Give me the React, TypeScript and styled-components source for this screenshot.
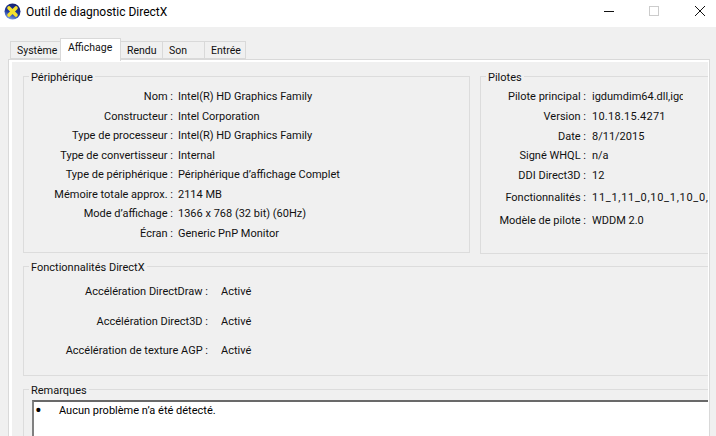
import React from 'react'
import styled, { createGlobalStyle } from 'styled-components'

const GlobalStyle = createGlobalStyle`
  html, body {
    margin: 0;
    padding: 0;
    height: 100%;
    overflow: hidden;
    background: #f0f0f0;
  }
  body {
    font-family: Roboto, 'Noto Sans', sans-serif;
    font-size: 11px;
    color: #111;
  }
`

const tabs = [
  ['Système', 51],
  ['Affichage', 61],
  ['Rendu', 43],
  ['Son', 43],
  ['Entrée', 42]
] as const

const deviceRows = [
  ['Nom', 'Intel(R) HD Graphics Family'],
  ['Constructeur', 'Intel Corporation'],
  ['Type de processeur', 'Intel(R) HD Graphics Family'],
  ['Type de convertisseur', 'Internal'],
  ['Type de périphérique', 'Périphérique d’affichage Complet'],
  ['Mémoire totale approx.', '2114 MB'],
  ['Mode d’affichage', '1366 x 768 (32 bit) (60Hz)'],
  ['Écran', 'Generic PnP Monitor']
]

// label, value, row height, clip width, letter spacing
const driverRows = [
  ['Pilote principal', 'igdumdim64.dll,igd10iumd64.dll', 20, 91, 0],
  ['Version', '10.18.15.4271', 19.5, 116, 0.25],
  ['Date', '8/11/2015', 19.5, 116, 0],
  ['Signé WHQL', 'n/a', 19.5, 116, 0],
  ['DDI Direct3D', '12', 22, 116, 0],
  ['Fonctionnalités', '11_1,11_0,10_1,10_0,9_3,9_2,9_1', 23, 116, 0.7],
  ['Modèle de pilote', 'WDDM 2.0', 20, 116, 0]
] as const

const featureRows = [
  ['Accélération DirectDraw', 'Activé'],
  ['Accélération Direct3D', 'Activé'],
  ['Accélération de texture AGP', 'Activé']
]

const App: React.FC = () => (
  <Window>
    <GlobalStyle />
    <TitleBar>
      <AppIcon viewBox="0 0 17 17">
        <defs>
          <linearGradient id="ball" x1="0.7" y1="0" x2="0.3" y2="1">
            <stop offset="0" stopColor="#14206e" />
            <stop offset="0.6" stopColor="#1f3aa0" />
            <stop offset="1" stopColor="#86a8e8" />
          </linearGradient>
        </defs>
        <circle cx="8.5" cy="8.5" r="8" fill="url(#ball)" />
        <path d="M5 5L12 12M12 5L5 12" stroke="#f5e12e" strokeWidth="3.6" strokeLinecap="round" />
      </AppIcon>
      <Title>Outil de diagnostic DirectX</Title>
      <WindowButtons>
        <MinimizeIcon width="10" height="10" viewBox="0 0 10 10"><path d="M0 5.5H10" stroke="#111" /></MinimizeIcon>
        <svg width="10" height="10" viewBox="0 0 10 10"><rect x="0.5" y="0.5" width="9" height="9" fill="none" stroke="#ccc" /></svg>
        <svg width="10" height="10" viewBox="0 0 10 10"><path d="M0 0L10 10M10 0L0 10" stroke="#111" /></svg>
      </WindowButtons>
    </TitleBar>
    <Content>
      <TabStrip>
        {tabs.map(([t, w]) => (
          <Tab key={t} $active={t === 'Affichage'} $width={w}>{t}</Tab>
        ))}
      </TabStrip>
      <Panel>
        <TopGroups>
          <DeviceGroup>
            <Legend>Périphérique</Legend>
            <RowList>
              {deviceRows.map(([k, v]) => (
                <InfoRow key={k} $labelWidth={149} $gap={5} $height={19.5}>
                  <Label>{k} :</Label>
                  <Value>{v}</Value>
                </InfoRow>
              ))}
            </RowList>
          </DeviceGroup>
          <DriverGroup>
            <Legend>Pilotes</Legend>
            <RowList>
              {driverRows.map(([k, v, h, w, s]) => (
                <InfoRow key={k} $labelWidth={105} $gap={6} $height={h}>
                  <Label>{k} :</Label>
                  <Value $maxWidth={w} $spacing={s}>{v}</Value>
                </InfoRow>
              ))}
            </RowList>
          </DriverGroup>
        </TopGroups>
        <FeatureGroup>
          <Legend>Fonctionnalités DirectX</Legend>
          <FeatureList>
            {featureRows.map(([k, v]) => (
              <FeatureRow key={k}>
                <Label>{k} :</Label>
                <Value>{v}</Value>
              </FeatureRow>
            ))}
          </FeatureList>
        </FeatureGroup>
        <NotesGroup>
          <Legend>Remarques</Legend>
          <NotesBox>
            <Bullet>•</Bullet>
            <NoteText>Aucun problème n’a été détecté.</NoteText>
          </NotesBox>
        </NotesGroup>
      </Panel>
    </Content>
  </Window>
)

const Window = styled.div`
  width: 716px;
  height: 436px;
  overflow: hidden;
  display: flex;
  flex-direction: column;
  background: #f0f0f0;
`

const TitleBar = styled.div`
  height: 27px;
  flex: none;
  background: #fff;
  display: flex;
  align-items: center;
  padding-left: 4px;
`

const AppIcon = styled.svg`
  width: 17px;
  height: 17px;
  margin-right: 5px;
  margin-top: -4px;
`

const Title = styled.div`
  font-size: 12px;
  margin-top: -4px;
  color: #000;
`

const WindowButtons = styled.div`
  margin-left: auto;
  display: flex;
  align-items: center;
  gap: 36px;
  padding-right: 11px;
  margin-top: -5px;
  svg {
    display: block;
  }
`

const MinimizeIcon = styled.svg`
  margin-right: -1px;
`

const Content = styled.div`
  flex: 1;
  padding: 11px 6px 0 8px;
  min-height: 0;
`

const TabStrip = styled.div`
  display: flex;
  align-items: flex-end;
  height: 21px;
  padding-left: 3px;
  position: relative;
  z-index: 1;
`

const Tab = styled.div<{ $active?: boolean; $width: number }>`
  box-sizing: border-box;
  width: ${p => p.$width}px;
  height: ${p => (p.$active ? 23 : 18)}px;
  margin-bottom: ${p => (p.$active ? -2 : 0)}px;
  border: 1px solid #d9d9d9;
  border-bottom: ${p => (p.$active ? 'none' : '1px solid #d9d9d9')};
  margin-left: -1px;
  padding-left: ${p => (p.$active ? 7 : 6)}px;
  background: ${p => (p.$active ? '#fff' : '#f0f0f0')};
  font-size: 10.5px;
  line-height: 17px;
  z-index: ${p => (p.$active ? 2 : 0)};
`

const Panel = styled.div`
  box-sizing: border-box;
  height: 400px;
  border: 1px solid #d9d9d9;
  padding: 16px 1px 0 14px;
  display: flex;
  flex-direction: column;
  gap: 12px;
  box-shadow: inset 3px 0 0 #fff, inset 0 2px 0 #fff, inset -1px 0 0 #fff;
`

const TopGroups = styled.div`
  display: flex;
  gap: 10px;
`

const DeviceGroup = styled.div`
  position: relative;
  box-sizing: border-box;
  width: 447px;
  height: 177px;
  flex: none;
  border: 1px solid #dcdcdc;
`

const DriverGroup = styled.div`
  position: relative;
  box-sizing: border-box;
  flex: 1;
  height: 178px;
  border: 1px solid #dcdcdc;
  border-right: none;
`

const FeatureGroup = styled.div`
  position: relative;
  box-sizing: border-box;
  height: 110px;
  flex: none;
  margin-bottom: 1px;
  border: 1px solid #dcdcdc;
  border-right: none;
`

const NotesGroup = styled.div`
  position: relative;
  box-sizing: border-box;
  height: 80px;
  border: 1px solid #dcdcdc;
  border-right: none;
  padding: 10px 0 0 8px;
`

const Legend = styled.div`
  position: absolute;
  top: -7px;
  left: 5px;
  padding: 0 2px;
  background: #f0f0f0;
  line-height: 15px;
`

const RowList = styled.div`
  padding-top: 10px;
  display: flex;
  flex-direction: column;
`

const InfoRow = styled.div<{ $labelWidth: number; $gap: number; $height: number }>`
  display: grid;
  grid-template-columns: ${p => p.$labelWidth}px minmax(0, 1fr);
  column-gap: ${p => p.$gap}px;
  height: ${p => p.$height}px;
  line-height: 19px;
  white-space: nowrap;
`

const Label = styled.div`
  text-align: right;
`

const Value = styled.div<{ $maxWidth?: number; $spacing?: number }>`
  overflow: hidden;
  max-width: ${p => (p.$maxWidth ? `${p.$maxWidth}px` : 'none')};
  letter-spacing: ${p => p.$spacing ?? 0}px;
`

const FeatureList = styled.div`
  padding-top: 15px;
  display: flex;
  flex-direction: column;
  gap: 10.5px;
`

const FeatureRow = styled.div`
  display: grid;
  grid-template-columns: 184px 1fr;
  column-gap: 13px;
  height: 19px;
  line-height: 19px;
  white-space: nowrap;
`

const NotesBox = styled.div`
  box-sizing: border-box;
  height: 80px;
  background: #fff;
  border-top: 2px solid #696969;
  border-left: 2px solid #808080;
  display: flex;
  padding-left: 1px;
  color: #000;
`

const Bullet = styled.span`
  width: 24px;
  flex: none;
  font-size: 20px;
  line-height: 16px;
`

const NoteText = styled.span`
  line-height: 17px;
`

export default App
